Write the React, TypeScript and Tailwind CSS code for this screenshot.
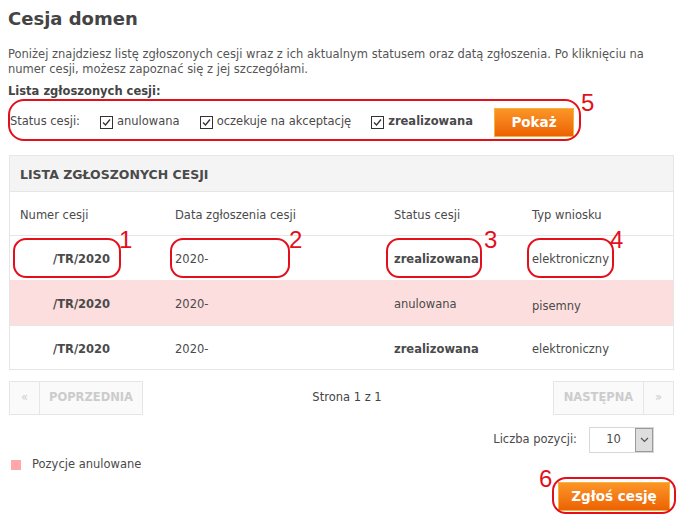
import React from "react";

const rows = [
  { nr: "/TR/2020", date: "2020-", status: "zrealizowana", bold: true, typ: "elektroniczny", cancelled: false },
  { nr: "/TR/2020", date: "2020-", status: "anulowana", bold: false, typ: "pisemny", cancelled: true },
  { nr: "/TR/2020", date: "2020-", status: "zrealizowana", bold: true, typ: "elektroniczny", cancelled: false },
];

function Check({ label, bold }: { label: string; bold?: boolean }) {
  return (
    <label className="flex items-center gap-[4px]">
      <svg width="13" height="13" viewBox="0 0 13 13" aria-hidden="true">
        <rect x="0.5" y="0.5" width="12" height="12" fill="#fff" stroke="#333" />
        <path d="M3 6.5 L5.5 9 L10 3.5" fill="none" stroke="#333" strokeWidth="1.3" />
      </svg>
      <span className={bold ? "font-bold" : ""}>{label}</span>
    </label>
  );
}

function OrangeButton({ children, className = "" }: { children: React.ReactNode; className?: string }) {
  return (
    <button
      className={
        "border border-[#f7b43a] bg-gradient-to-b from-[#fb9526] to-[#ec6200] text-white font-bold text-[13.5px] " +
        className
      }
    >
      {children}
    </button>
  );
}

// red hand-drawn annotation markers
function Mark({ n, box, num }: { n: string; box: string; num: string }) {
  return (
    <>
      <div className={"absolute border-2 border-[#e3101c] " + box} />
      <span className={"absolute text-[24px] leading-none text-[#e3101c] font-['Liberation_Sans',sans-serif] " + num}>
        {n}
      </span>
    </>
  );
}

export default function App() {
  return (
    <div className="relative w-[680px] h-[515px] bg-white text-[11.5px] text-[#4a4a4a] font-['DejaVu_Sans',Verdana,sans-serif] overflow-hidden">
      <div className="pl-[8px] pr-[6px]">
        <h1 className="pt-[6px] text-[18px] leading-[26px] font-bold text-[#444]">Cesja domen</h1>

        <p className="mt-[15px] leading-[15px] text-[#555]">
          Poniżej znajdziesz listę zgłoszonych cesji wraz z ich aktualnym statusem oraz datą zgłoszenia. Po kliknięciu na
          numer cesji, możesz zapoznać się z jej szczegółami.
        </p>

        <div className="mt-[7px] font-bold text-[#444] leading-[15px]">Lista zgłoszonych cesji:</div>

        {/* filter */}
        <div className="mt-[4px] flex items-center h-[38px] pl-[2px]">
          <span className="w-[90px]">Status cesji:</span>
          <div className="flex items-center gap-[20px]">
            <Check label="anulowana" />
            <Check label="oczekuje na akceptację" />
            <Check label="zrealizowana" bold />
          </div>
          <OrangeButton className="ml-[21px] w-[80px] h-[29px]">Pokaż</OrangeButton>
        </div>

        {/* list panel */}
        <div className="mt-[14px] ml-[1px] border border-[#e6e6e6]">
          <div className="h-[36px] pt-[4px] bg-[#f4f4f4] border-b border-[#e6e6e6] flex items-center pl-[10px] font-bold text-[12.5px] text-[#4a4a4a]">
            LISTA ZGŁOSZONYCH CESJI
          </div>
          <div className="grid grid-cols-[155px_219px_138px_1fr] pl-[10px] pt-[5px] h-[44px] items-center border-b border-[#e6e6e6]">
            <span>Numer cesji</span>
            <span>Data zgłoszenia cesji</span>
            <span>Status cesji</span>
            <span>Typ wniosku</span>
          </div>
          {rows.map((r, i) => (
            <div
              key={i}
              className={
                "grid grid-cols-[155px_219px_138px_1fr] pl-[10px] pt-[4px] items-center " +
                (r.cancelled ? "bg-[#fddede] h-[46px] border-b border-[#e6e6e6]" : i === 0 ? "h-[44px]" : "h-[43px]")
              }
            >
              <span className="pl-[33px] font-bold">{r.nr}</span>
              <span>{r.date}</span>
              <span className={r.bold ? "font-bold" : ""}>{r.status}</span>
              <span className={r.cancelled ? "pt-[4px]" : ""}>{r.typ}</span>
            </div>
          ))}
        </div>

        {/* pagination */}
        <div className="mt-[11px] ml-[1px] flex items-center justify-between h-[34px]">
          <div className="flex h-full font-bold text-[#cccccc]">
            <span className="w-[31px] border border-[#e6e6e6] bg-[#fafafa] flex items-center justify-center font-normal">«</span>
            <span className="w-[103px] border border-[#e6e6e6] border-l-0 bg-[#fafafa] flex items-center justify-center">POPRZEDNIA</span>
          </div>
          <span className="text-[#444] mr-[2px]">Strona 1 z 1</span>
          <div className="flex h-full font-bold text-[#cccccc]">
            <span className="w-[91px] border border-[#e6e6e6] bg-[#fafafa] flex items-center justify-center">NASTĘPNA</span>
            <span className="w-[30px] border border-[#e6e6e6] border-l-0 bg-[#fafafa] flex items-center justify-center font-normal">»</span>
          </div>
        </div>

        {/* page size */}
        <div className="mt-[12px] flex items-center justify-end pr-[20px]">
          <span className="mr-[12px]">Liczba pozycji:</span>
          <div className="w-[65px] h-[26px] border border-[#d8d8d8] flex">
            <span className="flex-1 flex items-center justify-center pl-[2px]">10</span>
            <span className="w-[18px] border border-[#9a9a9a] bg-[#dedede] flex items-center justify-center">
              <svg width="9" height="6" viewBox="0 0 9 6" aria-hidden="true">
                <path d="M1 1 L4.5 4.5 L8 1" fill="none" stroke="#555" strokeWidth="1.2" />
              </svg>
            </span>
          </div>
        </div>

        {/* legend + submit */}
        <div className="flex items-start justify-between">
          <div className="mt-[3px] ml-[3px] flex items-center">
            <span className="w-[10px] h-[10px] bg-[#ffa8a8]" />
            <span className="ml-[11px]">Pozycje anulowane</span>
          </div>
          <OrangeButton className="mt-[29px] mr-[4px] w-[112px] h-[29px]">Zgłoś cesję</OrangeButton>
        </div>
      </div>

      {/* annotations */}
      <Mark n="5" box="left-[8px] top-[99px] w-[573px] h-[42px] rounded-[16px]" num="left-[581px] top-[91px]" />
      <Mark n="1" box="left-[13px] top-[238px] w-[108px] h-[40px] rounded-[13px]" num="left-[119px] top-[228px]" />
      <Mark n="2" box="left-[170px] top-[238px] w-[120px] h-[40px] rounded-[13px]" num="left-[289px] top-[228px]" />
      <Mark n="3" box="left-[386px] top-[238px] w-[96px] h-[40px] rounded-[13px]" num="left-[484px] top-[228px]" />
      <Mark n="4" box="left-[527px] top-[238px] w-[87px] h-[40px] rounded-[13px]" num="left-[610px] top-[228px]" />
      <Mark n="6" box="left-[552px] top-[477px] w-[124px] h-[37px] rounded-[14px]" num="left-[539px] top-[467px]" />
    </div>
  );
}
